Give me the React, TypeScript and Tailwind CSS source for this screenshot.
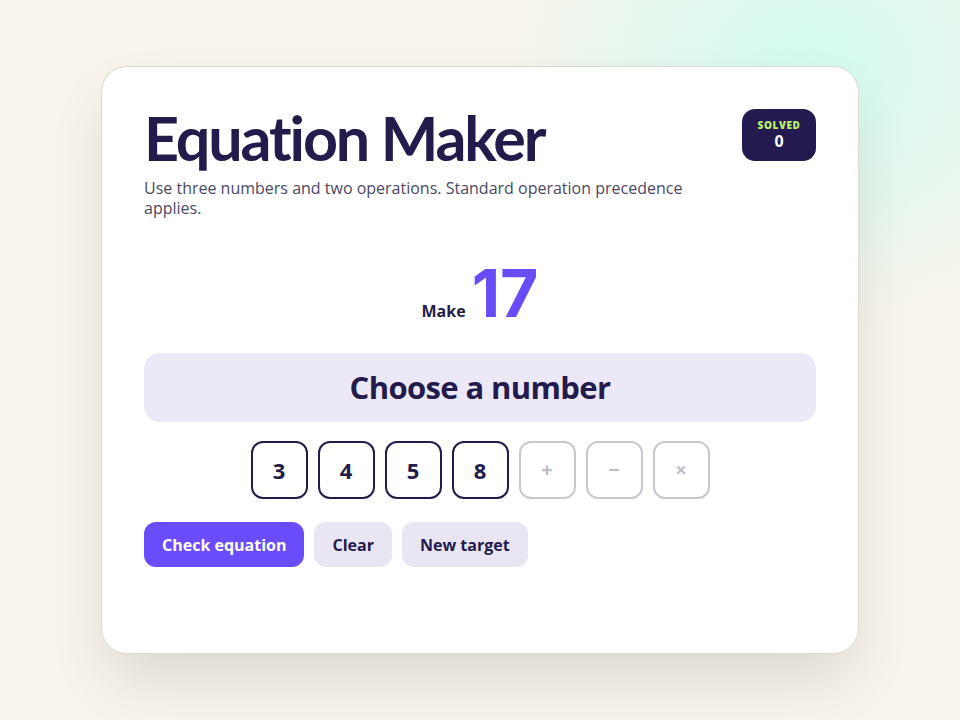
import { useState } from 'react'

const NUMBERS = [3, 4, 5, 8]
const OPERATIONS = ['+', '−', '×']

export default function App() {
  const [solved] = useState(0)
  const [target] = useState(17)

  return (
    <div className="relative flex min-h-[720px] w-full items-center justify-center overflow-hidden bg-[#f8f4ec] font-['Open_Sans',sans-serif]">
      <div className="pointer-events-none absolute -right-40 -top-48 h-[520px] w-[620px] rounded-full bg-[radial-gradient(closest-side,#d2fbee_0%,#e2f8ee_45%,rgba(248,244,236,0)_100%)]" />

      <main className="relative flex h-[588px] w-[758px] flex-col rounded-[26px] border border-[#dcd9d2] bg-white px-[42px] pt-[37px] shadow-[0_30px_60px_-10px_rgba(60,50,40,0.16)]">
        <header className="flex items-start justify-between gap-6">
          <div className="max-w-[560px]">
            <h1 className="font-['Lato',sans-serif] text-[61px] font-bold leading-[1.1] tracking-[-0.035em] text-[#231b4b]">
              Equation Maker
            </h1>
            <p className="mt-[7px] text-[16px] leading-[20px] text-[#4b4863]">
              Use three numbers and two operations. Standard operation precedence applies.
            </p>
          </div>
          <div className="mt-[5px] flex h-[52px] w-[74px] flex-col items-center justify-center rounded-[13px] bg-[#241a4f]">
            <span className="text-[10px] font-extrabold leading-[12px] tracking-[0.06em] text-[#b6f36a]">
              SOLVED
            </span>
            <span className="text-[16px] font-bold leading-[20px] text-white">{solved}</span>
          </div>
        </header>

        <div className="mt-[39px] flex items-baseline justify-center gap-[6px]">
          <span className="text-[16px] font-bold text-[#231b4b]">Make</span>
          <span className="font-['Inter',sans-serif] text-[66px] font-bold leading-[72px] text-[#6a4cf6]">
            {target}
          </span>
        </div>

        <div className="mt-[24px] flex h-[69px] items-center justify-center rounded-[16px] bg-[#ede8f7]">
          <span className="text-[31px] font-bold tracking-[-0.02em] text-[#231b4b]">Choose a number</span>
        </div>

        <div className="mt-[19px] flex justify-center gap-[10px]">
          {NUMBERS.map((n) => (
            <button
              key={n}
              type="button"
              className="flex h-[58px] w-[57px] items-center justify-center rounded-[12px] border-2 border-[#241c4a] bg-white text-[22px] font-bold text-[#231b4b]"
            >
              {n}
            </button>
          ))}
          {OPERATIONS.map((op) => (
            <button
              key={op}
              type="button"
              disabled
              className="flex h-[58px] w-[57px] items-center justify-center rounded-[12px] border-2 border-[#c9c8d1] bg-white text-[20px] font-bold text-[#bdbcc7]"
            >
              {op}
            </button>
          ))}
        </div>

        <div className="mt-[23px] flex gap-[10px]">
          <button
            type="button"
            className="h-[45px] rounded-[12px] bg-[#6b4cfa] px-[18px] text-[16px] font-bold text-white"
          >
            Check equation
          </button>
          <button
            type="button"
            className="h-[45px] rounded-[12px] bg-[#e9e5f3] px-[18px] text-[16px] font-bold text-[#231b4b]"
          >
            Clear
          </button>
          <button
            type="button"
            className="h-[45px] rounded-[12px] bg-[#e9e5f3] px-[18px] text-[16px] font-bold text-[#231b4b]"
          >
            New target
          </button>
        </div>
      </main>
    </div>
  )
}
